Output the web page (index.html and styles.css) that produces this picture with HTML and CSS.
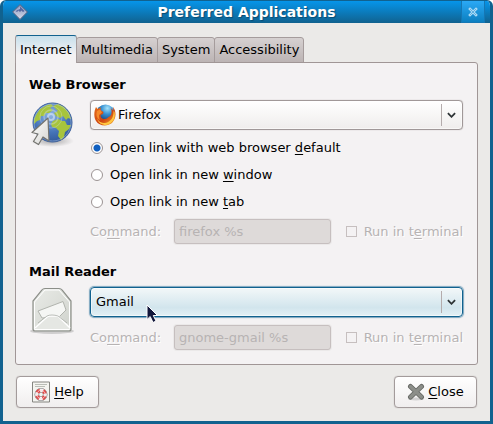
FILE: index.html
```html
<!DOCTYPE html>
<html lang="en">
<head>
<meta charset="utf-8">
<title>Preferred Applications</title>
<link rel="stylesheet" href="styles.css">
</head>
<body>
<div class="window">
  <header class="titlebar">
    <svg class="title-icon" viewBox="0 0 16 16" aria-hidden="true">
      <defs><linearGradient id="gem" x1="0" y1="0" x2="0" y2="1"><stop offset="0" stop-color="#8495bd"/><stop offset="1" stop-color="#d5daea"/></linearGradient></defs>
      <path d="M8 .6 15.400 8 8 15.400 .6 8z" fill="url(#gem)" stroke="#56607f"/>
      <path d="M8 2.500 12.500 7 11 8 9.500 6.500 8 8 6.500 6.500 5 8 3.500 7z" fill="#5467a0"/>
      <path d="M2.500 8 8 2.500 8 5 5.500 6z" fill="#a9b5d4"/>
    </svg>
    <h1 class="title">Preferred Applications</h1>
    <button class="win-close" type="button" aria-label="Close window">
      <svg viewBox="0 0 10 10"><path d="M2 2 8 8M8 2 2 8" stroke="#a9d9f4" stroke-width="2.600" stroke-linecap="square"/><path d="M2 2 8 8M8 2 2 8" stroke="#4da7dc" stroke-width=".8"/></svg>
    </button>
  </header>

  <main class="content">
    <nav class="tabs" role="tablist">
      <button class="tab tab-active" type="button" role="tab" aria-selected="true">Internet</button>
      <button class="tab" type="button" role="tab">Multimedia</button>
      <button class="tab" type="button" role="tab">System</button>
      <button class="tab" type="button" role="tab">Accessibility</button>
    </nav>

    <div class="panel" role="tabpanel">
      <section class="section">
        <h2 class="heading">Web Browser</h2>
        <svg class="app-icon" viewBox="0 0 46 48" aria-hidden="true">
          <defs>
            <radialGradient id="sea" cx=".45" cy=".3" r=".75"><stop offset="0" stop-color="#8fb5e2"/><stop offset=".6" stop-color="#4674b8"/><stop offset="1" stop-color="#2f5595"/></radialGradient>
            <linearGradient id="arrow" x1="0" y1="0" x2="1" y2="1"><stop offset="0" stop-color="#fff"/><stop offset="1" stop-color="#d5d5d1"/></linearGradient>
            <radialGradient id="shade"><stop offset="0" stop-color="#777" stop-opacity=".6"/><stop offset="1" stop-color="#777" stop-opacity="0"/></radialGradient>
          </defs>
          <ellipse cx="23" cy="41" rx="22" ry="6" fill="url(#shade)"/>
          <circle cx="23.500" cy="22.500" r="19.500" fill="url(#sea)" stroke="#385d99"/>
          <path d="M7 15 11 9 18 5 22 4 24 6 21 8 24 10 20 13 17 13 15 16 12 16 11 20 8 21 5 24 5 19z" fill="#a7c43d"/>
          <path d="M24 6 29 4 35 7 40 13 42 19 39 18 37 20 34 16 31 18 27 16 25 13 29 11 27 9z" fill="#a7c43d"/>
          <path d="M24 21 29 19 33 21 36 21 38 25 42 25 40 29 36 32 35 37 32 40 29 36 30 31 27 28 23 27 22 24z" fill="#a7c43d"/>
          <g fill="none" stroke="#dce9f8"><circle cx="22" cy="17" r="3" stroke-width="2" opacity=".6"/><circle cx="22" cy="17" r="7" stroke-width="1.500" opacity=".35"/><circle cx="22" cy="17" r="11" opacity=".3"/></g>
          <circle cx="23.500" cy="22.500" r="18.500" fill="none" stroke="#b5cdeb" opacity=".45"/>
          <path d="M19 18 3 32.500 9 34 4.500 41.500 9.500 44.500 14 37 20 41z" fill="url(#arrow)" stroke="#74746f" stroke-width="1.200" stroke-linejoin="round"/>
        </svg>
        <div class="fields">
          <div class="combo">
            <select class="combo-select with-icon" aria-label="Web browser"><option>Firefox</option></select>
            <svg class="combo-icon" viewBox="0 0 22 22" aria-hidden="true">
              <defs><radialGradient id="blue" cx=".6" cy=".2" r=".8"><stop offset="0" stop-color="#a5e4fb"/><stop offset=".4" stop-color="#368fd0"/><stop offset="1" stop-color="#10275f"/></radialGradient>
              <linearGradient id="fox" x1="0" y1="0" x2="1" y2="1"><stop offset="0" stop-color="#e56d19"/><stop offset=".55" stop-color="#cf4311"/><stop offset="1" stop-color="#f8b42c"/></linearGradient></defs>
              <circle cx="11.500" cy="10" r="9.500" fill="url(#blue)"/>
              <path d="M2 3 3.500 5 7 3.500 6.500 6 9.500 8 9 10 6.500 11 7 13.500C10 16 13 15 14.500 13 18 12 18 8 17 4L19.500 7 19 3C23 8 22 15 18 19 13 23 5 22 2 17-.5 13 0 7 2 3z" fill="url(#fox)"/>
              <path d="M19.500 7C20 13 17 18 11 19 7 19 4 17 3 14 4 19 8 21 12 21 18 20 22 15 20.500 8z" fill="#ffc640"/>
              <path d="M3 7 6 5.500 8 8.500 5 11C5 13 5 14 6 16 2 14 2 10 3 7z" fill="#f4892a"/>
            </svg>
            <svg class="combo-arrow" viewBox="0 0 10 6" aria-hidden="true"><path d="M1 1 5 5 9 1"/></svg>
          </div>
          <div class="radios">
            <label class="choice"><input class="radio" type="radio" name="open" checked><span>Open link with web browser <u>d</u>efault</span></label>
            <label class="choice"><input class="radio" type="radio" name="open"><span>Open link in new <u>w</u>indow</span></label>
            <label class="choice"><input class="radio" type="radio" name="open"><span>Open link in new <u>t</u>ab</span></label>
          </div>
          <div class="command">
            <label class="command-label" for="cmd-web">Co<u>m</u>mand:</label>
            <input class="entry" id="cmd-web" type="text" value="firefox %s" disabled>
            <label class="terminal"><input class="check" type="checkbox" disabled><span>Run in t<u>e</u>rminal</span></label>
          </div>
        </div>
      </section>

      <section class="section">
        <h2 class="heading">Mail Reader</h2>
        <svg class="app-icon" viewBox="0 0 46 48" aria-hidden="true">
          <defs><linearGradient id="paper" x1="0" y1="0" x2="1" y2="1"><stop offset="0" stop-color="#e9ebe7"/><stop offset="1" stop-color="#cfd2cc"/></linearGradient></defs>
          <ellipse cx="23" cy="44" rx="22" ry="3" fill="#aaa" opacity=".5"/>
          <path d="M16 1.500H30Q32 1.500 33 3L42 14V42Q42 44 40 44H6Q4 44 4 42V14L13 3Q14 1.500 16 1.500z" fill="url(#paper)" stroke="#8c8f89" stroke-width="1.200"/>
          <path d="M16 3H30L40.500 15V42.500H5.500V15z" fill="none" stroke="#fff"/>
          <path d="M9 24 34 14.500 37 23 30 30 13 31z" fill="#f5f6f4" stroke="#b1b4ae"/>
          <path d="M6 42 18 30Q19 29 21 29H27Q29 29 30 30L41 42z" fill="#e5e7e3"/>
          <path d="M6 41 18 30Q19 29 21 29H27Q29 29 30 30L41 41" fill="none" stroke="#fff" stroke-width="1.500"/>
          <path d="M9 36 18 29Q20 28 23 28T29 29L38 36" fill="none" stroke="#aaada7" stroke-width=".8"/>
        </svg>
        <div class="fields">
          <div class="combo">
            <select class="combo-select hovered" aria-label="Mail reader"><option>Gmail</option></select>
            <svg class="combo-arrow" viewBox="0 0 10 6" aria-hidden="true"><path d="M1 1 5 5 9 1"/></svg>
            <svg class="pointer" viewBox="0 0 12 20" aria-hidden="true"><path d="M1 1V15.500L4.200 12.500 7 18.500 10 17 7.300 11.500H11.500z"/></svg>
          </div>
          <div class="command">
            <label class="command-label" for="cmd-mail">Co<u>m</u>mand:</label>
            <input class="entry" id="cmd-mail" type="text" value="gnome-gmail %s" disabled>
            <label class="terminal"><input class="check" type="checkbox" disabled><span>Run in t<u>e</u>rminal</span></label>
          </div>
        </div>
      </section>
    </div>

    <footer class="actions">
      <button class="button" type="button">
        <svg class="button-icon help-icon" viewBox="0 0 20 22" aria-hidden="true">
          <path d="M1.500 1H18.500V21H1.500z" fill="#f4f4f0" stroke="#858580"/>
          <path d="M4 3.500H16M4 5.500H14" stroke="#babdb6"/>
          <circle cx="10" cy="13.500" r="4.200" stroke="#77777a" stroke-width="4.600"/>
          <circle cx="10" cy="13.500" r="4.200" stroke="#f6f4f4" stroke-width="3.400"/>
          <circle cx="10" cy="13.500" r="4.200" stroke="#e04545" stroke-width="3.600" stroke-dasharray="3.300 3.300" stroke-dashoffset="-1.650"/>
          <circle cx="10" cy="13.500" r="4.200" stroke="#f6dede" stroke-width=".8"/>
        </svg>
        <span><u>H</u>elp</span>
      </button>
      <button class="button" type="button">
        <svg class="button-icon" viewBox="0 0 18 18" aria-hidden="true">
          <ellipse cx="9" cy="16" rx="8" ry="1.500" fill="#bbb" opacity=".6"/>
          <path d="M3.500 3.500 14.500 14M14.500 3.500 3.500 14" stroke="#666864" stroke-width="5" stroke-linecap="round"/>
          <path d="M3.500 3.500 14.500 14M14.500 3.500 3.500 14" stroke="#8c8e89" stroke-width="3.200" stroke-linecap="round"/>
        </svg>
        <span><u>C</u>lose</span>
      </button>
    </footer>
  </main>
</div>
</body>
</html>
```
FILE: styles.css
```css
* {
  box-sizing: border-box;
}

body {
  margin: 0;
  background: #fff;
  color: #000;
  font: 13px/16px "DejaVu Sans", sans-serif;
}

button,
input,
select {
  margin: 0;
  color: inherit;
  font: inherit;
}

svg {
  display: block;
  flex: none;
  fill: none;
}

u {
  text-decoration: underline 1px;
  text-underline-offset: 2px;
}

.window {
  display: flex;
  flex-direction: column;
  min-height: 100vh;
  border: solid #11628f;
  border-width: 1px 3px 3px;
  border-radius: 6px 6px 0 0;
  background: #ebeae8;
  overflow: hidden;
}

.titlebar {
  display: flex;
  align-items: center;
  height: 22px;
  margin: 0 -2px;
  padding: 0 7px 0 11px;
  background: linear-gradient(#0695ea, #11628f);
}

.title-icon {
  width: 16px;
  height: 16px;
}

.title {
  flex: 1;
  margin: 0;
  padding-left: 4px;
  color: #fff;
  font-size: 14px;
  text-align: center;
  text-shadow: 1px 1px 1px #0a4c73;
}

.win-close {
  display: grid;
  place-items: center;
  width: 24px;
  height: 22px;
  padding: 0;
  border: 1px solid #1577b4;
  border-top: 0;
  background: linear-gradient(#2ba9f5, #0b7fc0);
}

.win-close svg {
  width: 10px;
  height: 10px;
}

.content {
  display: flex;
  flex: 1;
  flex-direction: column;
  padding: 12px 12px 13px;
}

.tabs {
  display: flex;
  align-items: flex-end;
}

.tab {
  height: 26px;
  margin-left: -1px;
  padding: 0 4px;
  border: 1px solid #a59c9c;
  border-radius: 3px 3px 0 0;
  background: linear-gradient(#d6d1d1, #bcb4b4);
}

.tab-active {
  height: 28px;
  margin-left: 0;
  border-color: #11628f #a59c9c;
  border-bottom: 0;
  background: linear-gradient(#c7e0ec, #f4f2f3 70%);
  z-index: 1;
}

.panel {
  display: flex;
  flex: 1;
  flex-direction: column;
  gap: 20px;
  margin-top: -1px;
  padding: 14px 14px 12px 13px;
  border: 1px solid #a09696;
  border-radius: 0 3px 3px 3px;
  background: #f4f2f3;
}

.section {
  display: grid;
  grid-template-columns: 46px minmax(0, 1fr);
  gap: 7px 15px;
}

.heading {
  grid-column: 1 / -1;
  margin: 0;
  font-size: 13px;
}

.app-icon {
  width: 46px;
  height: 48px;
}

.combo {
  position: relative;
}

.combo-select {
  display: block;
  width: 100%;
  height: 30px;
  padding: 0 28px 0 5px;
  border: 1px solid #a09898;
  border-radius: 4px;
  background: linear-gradient(#fff, #efedec);
  box-shadow: inset 0 0 0 1px #fff8, 0 0 1px #a09898;
  appearance: none;
}

.with-icon {
  padding-left: 27px;
}

.hovered {
  border-color: #11628f;
  background: linear-gradient(#eef5f7 10%, #d2e5ed 70%, #e2f0f5);
  box-shadow: inset 0 0 0 1px #fff8, 0 0 1px 1px #11628f88;
}

.combo-icon {
  position: absolute;
  top: 4px;
  left: 4px;
  width: 22px;
  height: 22px;
}

.combo-arrow {
  position: absolute;
  top: 4px;
  right: 0;
  width: 22px;
  height: 22px;
  padding: 8px 7px 8px 5px;
  border-left: 1px solid #b4acac;
  stroke: #2e3436;
  stroke-width: 2;
}

.pointer {
  position: absolute;
  top: 17px;
  left: 56px;
  width: 12px;
  height: 20px;
  fill: #11163a;
  stroke: #fff;
}

.radios {
  padding: 4px 0;
}

.choice {
  display: flex;
  align-items: center;
  gap: 7px;
  height: 27px;
  padding-left: 1px;
}

.radio {
  width: 12px;
  height: 12px;
  border: 1px solid #9b9393;
  border-radius: 50%;
  background: #fff;
  appearance: none;
}

.radio:checked {
  background: radial-gradient(circle, #0f5fc0 0 3px, #fff 4px);
}

.command {
  display: flex;
  align-items: center;
  color: #b7b3b3;
  text-shadow: 1px 1px #fff;
}

.combo + .command {
  margin-top: 8px;
}

.command-label {
  width: 84px;
}

.entry {
  flex: 1;
  min-width: 0;
  height: 25px;
  padding: 0 4px;
  border: 1px solid #c6bfbf;
  border-radius: 3px;
  background: #dedad9;
  box-shadow: 0 0 0 1px #ebe9e9;
  text-shadow: none;
}

.terminal {
  display: flex;
  align-items: center;
  gap: 7px;
  padding-left: 15px;
  white-space: nowrap;
}

.check {
  width: 11px;
  height: 11px;
  border: 1px solid #c6bfbf;
  background: #f4f2f3;
  appearance: none;
}

.actions {
  display: flex;
  justify-content: space-between;
  padding: 11px 1px 0;
}

.button {
  display: flex;
  align-items: center;
  justify-content: center;
  gap: 3px;
  min-width: 83px;
  height: 32px;
  padding: 0 6px;
  border: 1px solid #a39b9b;
  border-radius: 4px;
  background: linear-gradient(#fff, #f0eeee);
  box-shadow: 0 0 1px #a39b9b;
}

.button-icon {
  width: 18px;
  height: 18px;
}

.help-icon {
  width: 20px;
  height: 22px;
}
```
